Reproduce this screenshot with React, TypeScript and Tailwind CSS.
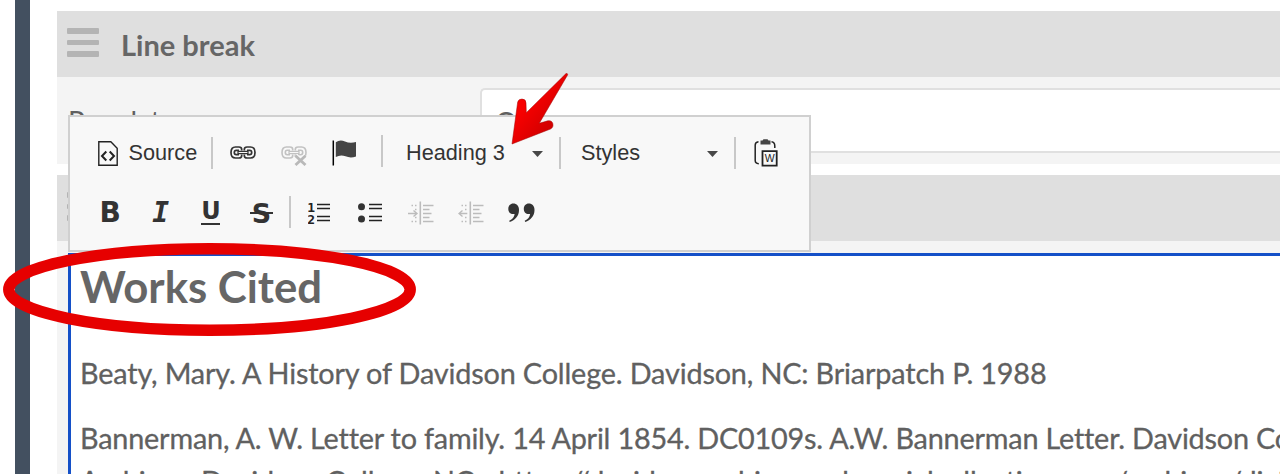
import type { ReactNode } from "react";

function DragHandle() {
  return (
    <div className="flex w-8 flex-col gap-[6px]">
      <div className="h-[5.4px] rounded-[1px] bg-[#b4b4b4]" />
      <div className="h-[5.4px] rounded-[1px] bg-[#b4b4b4]" />
      <div className="h-[5.4px] rounded-[1px] bg-[#b4b4b4]" />
    </div>
  );
}

function SectionHeader({ title }: { title: string }) {
  return (
    <div className="flex h-[66px] shrink-0 items-center bg-[#dfdfdf] pl-[10px]">
      <div className="-mt-[3px]">
        <DragHandle />
      </div>
      <h2 className="ml-[22px] text-[29px] leading-none font-bold text-[#666]">{title}</h2>
    </div>
  );
}

function Cell({ children }: { children: ReactNode }) {
  return <div className="flex w-[50.4px] shrink-0 items-center justify-center">{children}</div>;
}

function Separator({ className = "" }: { className?: string }) {
  return <div className={`h-8 w-[2px] shrink-0 bg-[#c8c8c8] ${className}`} />;
}

function Caret() {
  return (
    <svg width="11" height="6" viewBox="0 0 11 6" className="mt-[1px] shrink-0">
      <path d="M0 0h11L5.5 6z" fill="#484848" />
    </svg>
  );
}

function SourceIcon() {
  return (
    <svg width="20" height="25" viewBox="0 0 20 25" fill="none" stroke="#222">
      <path d="M.8.8h12l6.4 6.4v17H.8z" strokeWidth="1.4" />
      <path d="M8.3 10.5 4 15l4.3 4.5M11.7 10.5 16 15l-4.3 4.5" strokeWidth="2" />
    </svg>
  );
}

function LinkShape() {
  return (
    <>
      <path d="M11.700 4.500V3.500Q11.700 1 9 1H5.500Q1 1 1 6.500T5.500 12H9q2.700 0 2.700-2.500v-1" />
      <path d="M14.300 4.500V3.500Q14.300 1 17 1h3.500Q25 1 25 6.500T20.500 12H17q-2.700 0-2.700-2.500v-1" />
      <path d="M9 4.300H6.300Q4.300 4.300 4.300 6.500t2 2.200H9M17 4.300h2.700q2 0 2 2.200t-2 2.200H17" />
      <path d="M8 5.400h10V7.600H8z" strokeWidth="1.200" />
    </>
  );
}

function LinkIcon() {
  return (
    <svg width="26" height="13" viewBox="0 0 26 13" fill="none" stroke="#333" strokeWidth="1.700">
      <LinkShape />
    </svg>
  );
}

function UnlinkIcon() {
  return (
    <svg width="26" height="20" viewBox="0 0 26 20" fill="none" stroke="#c2c2c2" strokeWidth="1.600">
      <LinkShape />
      <path d="m14.500 9.800 10 9.200m0-9.200-10 9.200" stroke="#f8f8f8" strokeWidth="5" />
      <path d="m14.500 9.800 10 9.200m0-9.200-10 9.200" stroke="#b9b9b9" strokeWidth="2.800" />
    </svg>
  );
}

function FlagIcon() {
  return (
    <svg width="25" height="26" viewBox="0 0 25 26">
      <path d="M1.300.5v25" stroke="#000" strokeWidth="1.500" />
      <path d="M3.800 2.200Q8-.8 13 1.500q5 2.200 11 .5v14.500q-5.500 2-10.500-.2-5-1.900-9.700.7z" fill="#444" />
    </svg>
  );
}

function PasteWordIcon() {
  return (
    <svg width="24" height="28" viewBox="0 0 24 28" fill="none" stroke="#222" strokeWidth="1.500">
      <path d="M4.500 2.700Q1.200 3 1.200 6v15.500q0 3 3.600 3.200" />
      <path d="M17.500 2.700Q20.800 3 20.800 7v2" />
      <path d="M6.500 1.600h2L9.500.3h4l1 1.300h2v3.900h-10z" fill="#444" stroke="none" />
      <path d="M8.500 12.200h14.200v14.500H8.500z" strokeWidth="1.800" />
      <text x="15.600" y="23.300" textAnchor="middle" fontSize="10.500" fill="#222" stroke="none" fontFamily="Liberation Sans, sans-serif">W</text>
    </svg>
  );
}

function NumberedListIcon() {
  return (
    <svg width="23" height="24" viewBox="0 0 23 24">
      <g fontFamily="DejaVu Sans Mono, monospace" fontSize="13" fontWeight="bold" fill="#222">
        <text x="-.7" y="10.700">1</text>
        <text x="-.7" y="23.200">2</text>
      </g>
      <path d="M9 3.500h13M9 7.500h13M9 15.500h13M9 19.500h13" stroke="#222" strokeWidth="1.600" />
    </svg>
  );
}

function BulletListIcon() {
  return (
    <svg width="24" height="24" viewBox="0 0 24 24">
      <circle cx="3.500" cy="5.700" r="3.500" fill="#333" />
      <circle cx="3.500" cy="18" r="3.500" fill="#333" />
      <path d="M11 3.500h13M11 7.500h13M11 15.500h13M11 19.500h13" stroke="#222" strokeWidth="1.600" />
    </svg>
  );
}

function IndentIcon({ outdent = false }: { outdent?: boolean }) {
  return (
    <svg width="26" height="24" viewBox="0 0 26 24" fill="none" stroke="#bcbcbc" strokeWidth="1.400">
      <path d="M12.300.5v23" strokeWidth="1.600" />
      <path d="M15 4.500h10.500M15 8.500h6.500M15 12.500h8.500M15 16.500h6.500M15 20.500h10.500" />
      <path d="M3.500 4.500h6M3.500 20.500h6M7 16.500h2M7 8.500h2" strokeDasharray="1.500 2" />
      {outdent ? <path d="M.8 12.500h8.500M4.500 9.500l-3.500 3 3.500 3" /> : <path d="M0 12.500h8.500M5.500 9.500l3.500 3-3.500 3" />}
    </svg>
  );
}

function QuoteIcon() {
  return (
    <svg width="27" height="20" viewBox="0 0 27 20" fill="#333">
      <path d="M5.200.6c3.600 0 5.800 2.600 5.800 6.500 0 6-4 10.300-9.300 11.900l-.5-1.300c3.200-1.500 5.200-3.900 5.400-6.800-3.500 1-6.300-1.500-6.300-5C.3 2.900 2.400.6 5.200.6z" />
      <path transform="translate(15.500)" d="M5.200.6c3.600 0 5.800 2.600 5.800 6.500 0 6-4 10.300-9.300 11.900l-.5-1.300c3.200-1.500 5.200-3.900 5.400-6.800-3.500 1-6.300-1.500-6.300-5C.3 2.900 2.400.6 5.200.6z" />
    </svg>
  );
}

function Toolbar() {
  return (
    <div className="absolute top-[115px] left-[68px] h-[137px] w-[743px] border-2 border-[#d0d0d0] bg-[#f8f8f8] font-['Liberation_Sans',sans-serif] text-[21.700px] leading-none text-[#333]">
      <div className="flex h-[72px] items-center pl-[28px]">
        <SourceIcon />
        <span className="ml-[10.500px] w-[68.500px] whitespace-nowrap">Source</span>
        <Separator className="ml-[14px]" />
        <div className="ml-[17px] -mt-[1px]"><LinkIcon /></div>
        <div className="ml-[25px] mt-[6px]"><UnlinkIcon /></div>
        <div className="ml-[25px] -mt-[1px]"><FlagIcon /></div>
        <Separator className="-mt-[4px] ml-[24px]" />
        <span className="ml-[23px] w-[98px] whitespace-nowrap">Heading 3</span>
        <div className="ml-[28px]"><Caret /></div>
        <Separator className="ml-[16px]" />
        <span className="ml-[20px] w-[58px] whitespace-nowrap">Styles</span>
        <div className="ml-[68px]"><Caret /></div>
        <Separator className="ml-[16px]" />
        <div className="ml-[18px]"><PasteWordIcon /></div>
      </div>
      <div className="-mt-[12px] flex h-[72px] items-center pl-[15px]">
        <Cell><span className="font-['DejaVu_Sans',sans-serif] text-[28px] font-bold">B</span></Cell>
        <Cell><span className="font-['DejaVu_Sans_Mono',monospace] text-[28px] font-bold italic">I</span></Cell>
        <Cell>
          <span className="flex h-[24px] w-[19px] items-start justify-center border-b-2 border-[#333] font-['DejaVu_Sans',sans-serif] text-[24px] leading-[20px] font-bold">U</span>
        </Cell>
        <Cell>
          <span className="relative font-['DejaVu_Sans',sans-serif] text-[27px] font-bold">
            S
            <span className="absolute top-[12px] -left-[2px] h-[2px] w-[23px] bg-[#333]" />
          </span>
        </Cell>
        <Separator className="-mt-[2px] ml-[2px]" />
        <div className="ml-[4px] flex">
          <Cell><NumberedListIcon /></Cell>
          <Cell><BulletListIcon /></Cell>
          <Cell><IndentIcon /></Cell>
          <Cell><IndentIcon outdent /></Cell>
          <Cell><QuoteIcon /></Cell>
        </div>
      </div>
    </div>
  );
}

function Annotations() {
  return (
    <svg className="absolute inset-0" width="1280" height="474" viewBox="0 0 1280 474">
      <defs>
        <linearGradient id="arrow" x1="0" y1="0" x2="1" y2="1">
          <stop offset=".35" stopColor="#f80000" />
          <stop offset=".7" stopColor="#d40000" />
        </linearGradient>
      </defs>
      <ellipse cx="209.500" cy="289.500" rx="200.700" ry="40.700" fill="none" stroke="#e60000" strokeWidth="11.500" />
      <path
        d="M512 144 517.700 102Q518.500 99 522 99q4 0 4 4l.3 9.700L566 73.600q1.500-.7 1.700 1.200L539.300 123.300l8.500-2.500q4-.8 5 2.800.9 3.800-2.300 5.400z"
        fill="url(#arrow)"
        stroke="#a00000"
        strokeWidth=".5"
      />
    </svg>
  );
}

export default function App() {
  return (
    <div className="relative flex h-[474px] w-[1280px] overflow-hidden bg-white font-['Lato',sans-serif] text-[#606060] [font-variant-ligatures:none]">
      <div className="ml-[15px] w-[15px] shrink-0 bg-[#435060]" />
      <main className="ml-[27px] flex min-w-0 flex-1 flex-col pt-[11px]">
        <SectionHeader title="Line break" />
        <div className="flex h-[87px] shrink-0 bg-[#f4f4f4] pt-[11px] pl-[11px]">
          <div className="w-[412px] pt-[17px] text-[28px] leading-[32px] tracking-[-0.2px]">Populate</div>
          <div className="h-[65px] flex-1 rounded-l-[5px] border-2 border-r-0 border-[#e0e0e0] bg-white pt-[15px] pl-[13px] text-[28px] leading-[34px]">On</div>
        </div>
        <div className="h-[11px] shrink-0" />
        <SectionHeader title="Text" />
        <div className="flex min-h-0 flex-1 bg-[#f4f4f4] pt-[12px] pl-[11px]">
          <div className="min-w-0 flex-1 border-t-[3px] border-l-[3px] border-[#1450c8] bg-white pl-[9px] whitespace-nowrap">
            <h3 className="pt-[5px] text-[43.700px] leading-[50px] font-bold text-[#666]">Works Cited</h3>
            <p className="mt-[41px] text-[28.800px] leading-[43px] tracking-[-0.150px] [-webkit-text-stroke:0.300px_#606060]">
              Beaty, Mary. A History of Davidson College. Davidson, NC: Briarpatch P. 1988
            </p>
            <p className="mt-[22px] text-[28.800px] leading-[43px] tracking-[-0.190px] [-webkit-text-stroke:0.300px_#606060]">
              Bannerman, A. W. Letter to family. 14 April 1854. DC0109s. A.W. Bannerman Letter. Davidson College
              <br />
              <span className="tracking-[-0.1px]">
                Archives, Davidson College, NC. <span className="-mr-[6px]">&lt;</span>https://davidsonarchivesandspecialcollections.org/archives/digital
              </span>
            </p>
          </div>
        </div>
      </main>
      <Toolbar />
      <Annotations />
    </div>
  );
}
